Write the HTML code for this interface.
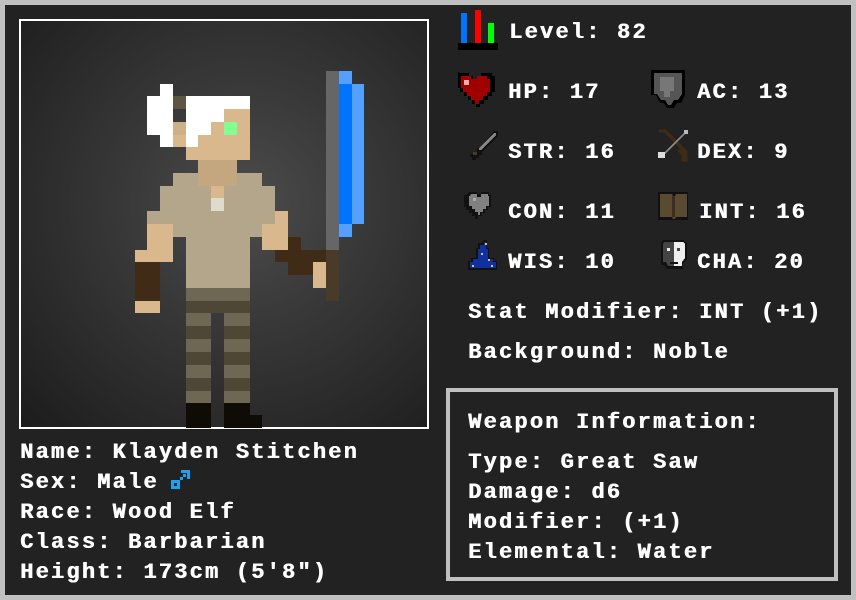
<!DOCTYPE html>
<html><head><meta charset="utf-8"><style>
*{margin:0;padding:0;box-sizing:border-box}
html,body{width:856px;height:600px;overflow:hidden;background:#c0c0c0}
#main{position:absolute;left:5px;top:5px;width:846px;height:590px;background:#222}
.t{position:absolute;color:#fff;font-family:"Liberation Mono",monospace;font-weight:bold;font-size:22px;letter-spacing:2.2px;line-height:22px;white-space:pre;text-shadow:0.6px 0 0 #fff;margin-top:2px}
#frame{position:absolute;left:19px;top:19px;width:410px;height:410px;border:2px solid #fff;background:radial-gradient(circle at 55% 45%,#4c4c4c 0%,#3a3a3a 35%,#1c1c1c 100%);overflow:hidden}
#weap{position:absolute;left:446px;top:388px;width:392px;height:193px;border:4px solid #c0c0c0}
svg{position:absolute}
</style></head><body>
<div id="main"></div>
<div id="frame"></div>
<svg style="left:0;top:0" width="856" height="600" shape-rendering="crispEdges">
<g>
<rect x="326" y="71" width="13" height="179" fill="#666"/>
<rect x="339" y="71" width="13" height="13" fill="#55a0ff"/>
<rect x="339" y="84" width="13" height="140" fill="#0073ff"/>
<rect x="352" y="84" width="12" height="140" fill="#55a0ff"/>
<rect x="339" y="224" width="13" height="13" fill="#55a0ff"/>
<rect x="326" y="250" width="13" height="51" fill="#4a3a28"/>
<rect x="160" y="84" width="13" height="12" fill="#fff"/>
<rect x="147" y="96" width="26" height="39" fill="#fff"/>
<rect x="160" y="135" width="13" height="12" fill="#fff"/>
<rect x="186" y="96" width="64" height="13" fill="#fff"/>
<rect x="173" y="96" width="13" height="13" fill="#5f5543"/>
<rect x="224" y="109" width="26" height="13" fill="#d8b88c"/>
<rect x="173" y="122" width="13" height="13" fill="#cdb088"/>
<rect x="173" y="135" width="13" height="12" fill="#d8b88c"/>
<rect x="198" y="122" width="52" height="38" fill="#d8b88c"/>
<rect x="186" y="147" width="12" height="13" fill="#d8b88c"/>
<rect x="224" y="122" width="13" height="13" fill="#80ff90"/>
<rect x="186" y="109" width="38" height="13" fill="#fff"/>
<rect x="186" y="122" width="25" height="13" fill="#fff"/>
<rect x="186" y="135" width="12" height="12" fill="#fff"/>
<rect x="198" y="160" width="39" height="26" fill="#c4a77e"/>
<rect x="173" y="173" width="25" height="13" fill="#b3a68a"/>
<rect x="237" y="173" width="25" height="13" fill="#b3a68a"/>
<rect x="160" y="186" width="115" height="25" fill="#b3a68a"/>
<rect x="147" y="211" width="128" height="26" fill="#b3a68a"/>
<rect x="186" y="237" width="64" height="51" fill="#b3a68a"/>
<rect x="211" y="186" width="13" height="12" fill="#d8b88c"/>
<rect x="211" y="198" width="13" height="13" fill="#e0dccc"/>
<rect x="147" y="224" width="26" height="26" fill="#d8b88c"/>
<rect x="135" y="250" width="38" height="12" fill="#d8b88c"/>
<rect x="135" y="262" width="25" height="39" fill="#3f2b16"/>
<rect x="135" y="301" width="25" height="12" fill="#d8b88c"/>
<rect x="275" y="211" width="13" height="13" fill="#d8b88c"/>
<rect x="262" y="224" width="26" height="26" fill="#d8b88c"/>
<rect x="288" y="237" width="13" height="13" fill="#3f2b16"/>
<rect x="275" y="250" width="51" height="12" fill="#3f2b16"/>
<rect x="288" y="262" width="25" height="13" fill="#3f2b16"/>
<rect x="313" y="262" width="13" height="26" fill="#d8b88c"/>
<rect x="186" y="288" width="64" height="13" fill="#6e6753"/>
<rect x="186" y="301" width="64" height="12" fill="#4f4735"/>
<g fill="#6e6753"><rect x="186" y="313" width="25" height="90"/><rect x="224" y="313" width="26" height="90"/></g>
<g fill="#4f4735"><rect x="186" y="326" width="25" height="13"/><rect x="224" y="326" width="26" height="13"/><rect x="186" y="352" width="25" height="13"/><rect x="224" y="352" width="26" height="13"/><rect x="186" y="378" width="25" height="13"/><rect x="224" y="378" width="26" height="13"/></g>
<g fill="#0f0c05"><rect x="186" y="403" width="25" height="25"/><rect x="224" y="403" width="26" height="25"/><rect x="250" y="415" width="12" height="13"/></g>
</g>
<rect x="461" y="13" width="6" height="30" fill="#0073ff"/>
<rect x="475" y="10" width="6" height="33" fill="#f00"/>
<rect x="488" y="23" width="6" height="20" fill="#0f0"/>
<rect x="458" y="43" width="40" height="7" fill="#000"/>
<path d="M461 73h11v3h4v3h4v-3h4v-3h11v3h3v16h-3v4h-4v4h-4v4h-4v3h-4v-3h-4v-4h-4v-4h-4v-4h-4v-4h-2v-16h2z" transform="translate(-3,0)" fill="#000"/>
<path d="M461 76h10v3h6v-3h10v3h3v13h-3v4h-4v4h-4v4h-4v-4h-4v-4h-4v-4h-4v-4h-2v-13z" fill="#a00000"/>
<rect x="464" y="80" width="5" height="5" fill="#f0b0b0"/>
<path d="M651 70h34v25l-4 8h-4l-3 5h-7l-3-5h-4l-4-8h-5z" fill="#000"/>
<path d="M654 73h28v21l-4 6h-4l-3 5h-3l-3-5h-4l-4-6h-3z" fill="#555"/>
<rect x="660" y="77" width="14" height="14" fill="#777"/><rect x="664" y="91" width="6" height="6" fill="#777"/>
<path d="M494 131h4v5l-16 16v3h-3v3h-3v2h-4v-3h-2v-3h4l3-3v-3h3z" fill="#111"/>
<path d="M494 133h2v2l-15 15h-2v-2z" fill="#888"/>
<rect x="473" y="152" width="4" height="3" fill="#4a3a28"/>
<path d="M659 131h6l4 4 4 4 4 4 5 5 4 4v8h-3v-6l-4-4" stroke="#3f2b16" stroke-width="3" fill="none"/>
<path d="M686 132l-24 24" stroke="#888" stroke-width="2"/>
<rect x="658" y="152" width="7" height="6" fill="#ddd"/><rect x="684" y="130" width="4" height="4" fill="#bbb"/>
<path d="M469 192h8v2h4v-2h8v3h2v12h-3v3h-3v3h-3v3h-4v3h-3v-3h-3v-3h-3v-3h-3v-3h-2v-12h2z" fill="#111"/>
<path d="M471 194h6v3h4v-3h7v2h1v10h-3v3h-3v3h-3v3h-2v-3h-3v-3h-3v-3h-3v-10h1z" fill="#808080"/>
<rect x="473" y="198" width="3" height="3" fill="#aaa"/>
<path d="M658 192h30v28h-30z" fill="#111"/>
<path d="M660 194h12l1 2h2l1-2h11v23h-11l-1 2h-2l-1-2h-12z" fill="#5a4a30"/>
<rect x="672" y="196" width="3" height="21" fill="#3a2e1c"/>
<path d="M484 240h3v8h2v10h5v3h3v9h-29v-9h3v-3h5v-10h2v-5h3z" fill="#111"/>
<path d="M484 242h2v7h2v10h5v3h3v6h-26v-6h3v-3h5v-10h2v-4h4z" fill="#1030a0"/>
<g fill="#d8c070"><rect x="485" y="243" width="2" height="2"/><rect x="481" y="253" width="2" height="2"/><rect x="488" y="259" width="2" height="2"/><rect x="472" y="265" width="2" height="2"/><rect x="491" y="265" width="2" height="2"/></g>
<path d="M663 240h20l4 3v16l-4 4v6h-16l-3-4h-3v-22z" fill="#111"/>
<path d="M664 242h10v24h-6l-2-4h-3v-18z" fill="#444"/>
<path d="M674 242h9l2 2v14l-3 4v4h-8z" fill="#eee"/>
<rect x="667" y="248" width="3" height="3" fill="#eee"/><rect x="677" y="248" width="3" height="3" fill="#444"/>
<rect x="670" y="262" width="8" height="2" fill="#111"/>
<g fill="#1da1f2"><rect x="171" y="480" width="9" height="3"/><rect x="171" y="486" width="3" height="3"/><rect x="177" y="480" width="3" height="9"/><rect x="171" y="483" width="3" height="3"/><rect x="174" y="486" width="6" height="3"/><rect x="180" y="477" width="3" height="3"/><rect x="183" y="474" width="3" height="3"/><rect x="181" y="470" width="9" height="3"/><rect x="187" y="470" width="3" height="9"/></g>
</svg>
<div id="weap"></div>
<div class="t" style="left:509px;top:20px">Level: 82</div>
<div class="t" style="left:508px;top:80px">HP: 17</div>
<div class="t" style="left:697px;top:80px">AC: 13</div>
<div class="t" style="left:508px;top:140px">STR: 16</div>
<div class="t" style="left:697px;top:140px">DEX: 9</div>
<div class="t" style="left:508px;top:200px">CON: 11</div>
<div class="t" style="left:699px;top:200px">INT: 16</div>
<div class="t" style="left:508px;top:250px">WIS: 10</div>
<div class="t" style="left:697px;top:250px">CHA: 20</div>
<div class="t" style="left:468px;top:300px">Stat Modifier: INT (+1)</div>
<div class="t" style="left:468px;top:340px">Background: Noble</div>
<div class="t" style="left:468px;top:410px">Weapon Information:</div>
<div class="t" style="left:468px;top:450px">Type: Great Saw</div>
<div class="t" style="left:468px;top:480px">Damage: d6</div>
<div class="t" style="left:468px;top:510px">Modifier: (+1)</div>
<div class="t" style="left:468px;top:540px">Elemental: Water</div>
<div class="t" style="left:20px;top:440px">Name: Klayden Stitchen</div>
<div class="t" style="left:20px;top:470px">Sex: Male</div>
<div class="t" style="left:20px;top:500px">Race: Wood Elf</div>
<div class="t" style="left:20px;top:530px">Class: Barbarian</div>
<div class="t" style="left:20px;top:560px">Height: 173cm (5'8")</div>
</body></html>
